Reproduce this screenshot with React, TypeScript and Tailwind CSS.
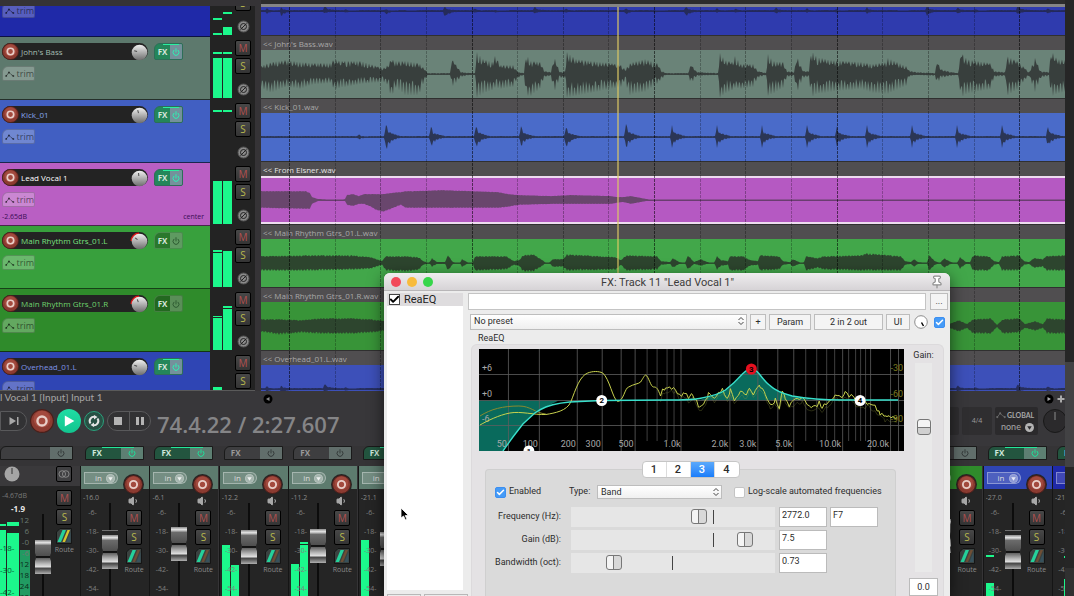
import { useState } from 'react'
import type { ReactNode } from 'react'
import { Power, Pin, Volume1, Check } from 'lucide-react'

// x, height above the centre, height below the centre
type Point = [number, number, number]

interface Track {
  name: string
  file: string
  color: string
  nameColor: string
  itemColor: string
  waveColor: string
  points: Point[]
  rough: number
  fxOn: boolean
  pan: number
  panRed?: boolean
  selected?: boolean
  // bar height, gap under the peak line, peak line height
  meters: [number, number, number][]
}

interface Strip {
  color: string
  fxOn: boolean
  peak: string
  fader: number
  mark?: boolean
  meters: [number, number, number][]
}

const WAVE_WIDTH = 804

// small seeded generator so that the waves stay the same between renders
const makeRandom = (seed: number) => {
  let value = seed
  return () => {
    value = (value * 16807) % 2147483647
    return value / 2147483647
  }
}

const wavePath = (points: Point[], rough: number, seed: number): string => {
  const random = makeRandom(seed)
  const top: string[] = []
  const bottom: string[] = []
  let i = 0
  for (let x = 0; x <= WAVE_WIDTH; x++) {
    while (i < points.length - 2 && points[i + 1][0] <= x) i++
    const [x0, u0, d0] = points[i]
    const [x1, u1, d1] = points[i + 1]
    const t = Math.min(1, Math.max(0, (x - x0) / (x1 - x0)))
    const shape = x % 3 === 0 ? 1 : 1 - rough * (0.2 + random() * 0.5)
    const up = (u0 + (u1 - u0) * t) * shape
    const down = (d0 + (d1 - d0) * t) * (x % 3 === 0 ? 1 : 1 - rough * (0.5 + random() * 0.5))
    top.push(`${x},${(24 - Math.max(0.4, up)).toFixed(1)}`)
    bottom.unshift(`${x},${(24 + Math.max(0.4, down)).toFixed(1)}`)
  }
  return `M${top.join('L')}L${bottom.join('L')}Z`
}

const hits = (list: Point[], floor: number, decay: number): Point[] => {
  const out: Point[] = [[0, floor, floor]]
  list.forEach(([x, up, down]) => {
    out.push([x - 2, floor, floor], [x, up, down], [x + 2, up / 2.5, down / 1.7])
    out.push([x + decay / 2, up / 4, down / 4], [x + decay, floor, floor])
  })
  out.push([WAVE_WIDTH, floor, floor])
  return out
}

const bass: Point[] = [
  [0, 8, 13], [5, 10, 17], [10, 12, 19], [25, 14, 13], [40, 12, 15], [50, 11, 11], [70, 11, 9], [73, 15, 16],
  [80, 13, 14], [100, 13, 10], [122, 6, 8], [127, 9, 11], [130, 15, 24], [135, 13, 14], [145, 13, 22],
  [158, 11, 21], [163, 6, 8], [167, 1, 1], [189, 1, 1], [191, 15, 13], [196, 8, 8], [200, 2, 3], [210, 1, 1],
  [214, 1, 1], [216, 22, 24], [222, 15, 20], [232, 12, 16], [234, 18, 14], [240, 9, 15], [252, 9, 13],
  [257, 2, 4], [263, 1, 1], [265, 20, 22], [270, 13, 22], [280, 12, 14], [283, 3, 3], [290, 2, 2], [293, 18, 19],
  [299, 2, 4], [304, 3, 4], [306, 22, 24], [315, 15, 22], [330, 13, 19], [350, 11, 15], [360, 9, 13],
  [365, 4, 5], [367, 10, 23], [372, 12, 20], [384, 15, 18], [396, 11, 10], [401, 3, 5], [405, 1, 1], [427, 1, 1],
  [430, 10, 10], [436, 2, 2], [457, 1, 1], [459, 21, 24], [464, 14, 20], [472, 12, 16], [474, 18, 14],
  [480, 10, 15], [492, 10, 13], [497, 3, 4], [505, 1, 1], [507, 20, 22], [512, 13, 20], [522, 12, 14],
  [526, 3, 3], [533, 2, 2], [536, 18, 19], [542, 3, 4], [548, 3, 3], [550, 24, 24], [556, 17, 20], [570, 14, 18],
  [600, 12, 15], [612, 10, 19], [625, 12, 20], [627, 16, 20], [645, 8, 12], [648, 4, 3], [655, 2, 1],
  [674, 1, 2], [676, 13, 10], [680, 5, 4], [690, 2, 2], [697, 1, 1], [700, 22, 24], [706, 15, 20],
  [716, 13, 18], [730, 11, 15], [733, 3, 3], [744, 2, 2], [746, 18, 22], [756, 13, 16], [764, 6, 6],
  [768, 2, 2], [774, 16, 18], [780, 3, 4], [788, 2, 2], [790, 24, 23], [796, 15, 20], [804, 14, 18]
]

const vocal: Point[] = [
  [0, 9, 8], [45, 9, 9], [49, 7, 9], [51, 3, 4], [57, 1, 1], [80, 0, 0], [84, 1, 1], [86, 5, 5], [92, 6, 6],
  [98, 4, 4], [103, 6, 4], [110, 6, 7], [115, 6, 10], [122, 6, 12], [130, 7, 9], [137, 8, 6], [140, 8, 5],
  [145, 9, 8], [155, 9, 8], [180, 10, 8], [237, 8, 8], [247, 6, 7], [257, 5, 5], [290, 4, 4], [310, 5, 4],
  [350, 4, 4], [355, 3, 3], [362, 3, 2], [370, 4, 4], [380, 2, 2], [392, 0, 0], [804, 0, 0]
]

const guitarLeft: Point[] = [
  [0, 7, 8], [50, 8, 8], [90, 8, 7], [110, 6, 6], [118, 3, 3], [121, 2, 2], [125, 7, 8], [145, 7, 9], [158, 6, 7],
  [162, 2, 2], [168, 0, 0], [171, 5, 4], [176, 1, 1], [184, 1, 1], [187, 8, 8], [192, 1, 1], [199, 0, 0],
  [201, 4, 4], [208, 0, 0], [212, 1, 1], [214, 7, 8], [245, 7, 7], [253, 2, 2], [258, 3, 3], [262, 8, 9],
  [272, 9, 9], [280, 4, 4], [285, 0, 0], [288, 0, 0], [292, 4, 4], [302, 4, 4], [306, 9, 8], [355, 6, 7],
  [360, 3, 2], [365, 8, 8], [396, 7, 7], [400, 2, 2], [409, 1, 1], [412, 5, 5], [418, 1, 1], [424, 0, 0],
  [427, 8, 7], [433, 1, 1], [440, 4, 3], [446, 1, 1], [453, 0, 0], [456, 7, 7], [460, 3, 3], [467, 2, 2],
  [469, 7, 8], [482, 7, 8], [489, 3, 3], [497, 2, 2], [499, 8, 8], [518, 7, 7], [522, 2, 2], [529, 1, 1],
  [532, 4, 4], [540, 0, 0], [543, 1, 1], [545, 7, 8], [557, 5, 5], [562, 7, 7], [600, 8, 8], [606, 10, 8],
  [640, 7, 8], [644, 2, 2], [650, 1, 1], [653, 4, 4], [657, 1, 1], [666, 0, 0], [668, 8, 8], [674, 2, 2],
  [679, 0, 0], [683, 5, 5], [690, 1, 1], [696, 0, 0], [699, 6, 6], [705, 1, 1], [709, 1, 1], [712, 8, 8],
  [728, 7, 8], [733, 2, 2], [738, 1, 1], [741, 7, 8], [758, 8, 8], [763, 2, 2], [768, 1, 1], [773, 5, 5],
  [782, 4, 4], [785, 7, 8], [804, 8, 8]
]

const guitarRight: Point[] = [
  [0, 7, 6], [18, 7, 9], [40, 6, 7], [60, 8, 8], [90, 8, 8], [110, 7, 7], [124, 5, 5], [200, 7, 7], [600, 7, 7],
  [688, 2, 2], [698, 6, 6], [706, 2, 2], [712, 7, 8], [730, 8, 8], [736, 1, 1], [742, 7, 8], [758, 8, 7],
  [764, 2, 2], [774, 5, 5], [782, 2, 2], [786, 8, 8], [804, 7, 8]
]

const kick = hits(
  [
    [98, 3, 3], [125, 15, 15], [170, 12, 11], [215, 13, 12], [260, 12, 11], [305, 12, 12], [365, 15, 13],
    [411, 12, 11], [456, 12, 11], [501, 12, 11], [546, 12, 11], [576, 11, 10], [606, 12, 11], [651, 12, 11],
    [696, 12, 11], [741, 12, 11], [787, 12, 11]
  ],
  1, 14
)

const overheads = hits(
  [
    [6, 3, 3], [20, 4, 6], [64, 6, 3], [85, 2, 2], [125, 2, 4], [145, 1, 1], [184, 5, 7], [214, 3, 2], [235, 1, 2],
    [274, 5, 3], [305, 3, 2], [365, 3, 4], [394, 1, 2], [425, 5, 6], [456, 3, 2], [475, 3, 2], [515, 4, 3], [546, 3, 2],
    [575, 2, 2], [606, 4, 3], [636, 1, 1], [666, 5, 5], [697, 4, 3], [715, 2, 2], [757, 6, 4], [787, 3, 3]
  ],
  1, 14
)

const tracks: Track[] = [
  {
    name: '', file: '', color: 'bg-[#1f29a8]', nameColor: 'text-[#8a94e8]', itemColor: 'bg-[#2f3bae]',
    waveColor: 'fill-[#252b5a]', points: overheads, rough: 0.4, fxOn: true, pan: 0,
    meters: [[2, 13, 2], [8, 13, 2]]
  },
  {
    name: "John's Bass", file: "John's Bass.wav", color: 'bg-[#5d796d]', nameColor: 'text-[#a3bdb2]', itemColor: 'bg-[#6a8378]',
    waveColor: 'fill-[#383f3d]', points: bass, rough: 0.7, fxOn: true, pan: -75,
    meters: [[40, 4, 2], [40, 4, 2]]
  },
  {
    name: 'Kick_01', file: 'Kick_01.wav', color: 'bg-[#415fc2]', nameColor: 'text-[#86a5ee]', itemColor: 'bg-[#4a6bc9]',
    waveColor: 'fill-[#2b3656]', points: kick, rough: 0.5, fxOn: true, pan: -15,
    meters: [[0, 49, 2], [0, 49, 2]]
  },
  {
    name: 'Lead Vocal 1', file: 'From Elsner.wav', color: 'bg-[#b95fc3]', nameColor: 'text-white', itemColor: 'bg-[#b559c2]',
    waveColor: 'fill-[#69466d]', points: vocal, rough: 0.08, fxOn: true, pan: -5, selected: true,
    meters: [[43, 0, 0], [43, 0, 0]]
  },
  {
    name: 'Main Rhythm Gtrs_01.L', file: 'Main Rhythm Gtrs_01.L.wav', color: 'bg-[#38a03d]', nameColor: 'text-[#7ae07f]',
    itemColor: 'bg-[#42a74a]', waveColor: 'fill-[#2d452e]', points: guitarLeft, rough: 0.25, fxOn: false, pan: -50, panRed: true,
    meters: [[34, 1, 2], [36, 0, 0]]
  },
  {
    name: 'Main Rhythm Gtrs_01.R', file: 'Main Rhythm Gtrs_01.R.wav', color: 'bg-[#2f8b2b]', nameColor: 'text-[#6fd36d]',
    itemColor: 'bg-[#389438]', waveColor: 'fill-[#2d452e]', points: guitarRight, rough: 0.25, fxOn: false, pan: -20, panRed: true,
    meters: [[32, 1, 1], [41, 1, 2]]
  },
  {
    name: 'Overhead_01.L', file: 'Overhead_01.L.wav', color: 'bg-[#2f45b4]', nameColor: 'text-[#7f93e6]', itemColor: 'bg-[#3d50b9]',
    waveColor: 'fill-[#262e5c]', points: overheads, rough: 0.4, fxOn: true, pan: -70,
    meters: [[26, 0, 0], [0, 0, 0]]
  }
]

const slate = 'bg-[#5d7b6e]'

const leftStrips: Strip[] = [
  { color: slate, fxOn: true, peak: '-16.0', fader: 46, mark: true, meters: [[0, 0, 0], [0, 0, 0]] },
  { color: slate, fxOn: true, peak: '-6.1', fader: 38, meters: [[0, 0, 0], [0, 0, 0]] },
  { color: slate, fxOn: false, peak: '-12.2', fader: 41, meters: [[51, 0, 0], [31, 0, 0]] },
  { color: slate, fxOn: false, peak: '-11.2', fader: 40, meters: [[31, 0, 1], [51, 1, 2]] },
  { color: slate, fxOn: true, peak: '-21.1', fader: 43, meters: [[56, 0, 0], [0, 0, 0]] }
]

const rightStrips: Strip[] = [
  { color: 'bg-[#2f8b2b]', fxOn: false, peak: '', fader: 30, meters: [[0, 0, 0], [0, 0, 0]] },
  { color: 'bg-[#2f45b4]', fxOn: true, peak: '-27.0', fader: 46, mark: true, meters: [[13, 26, 2], [0, 0, 0]] }
]

const lastStrip: Strip = { color: 'bg-[#1f29a8]', fxOn: true, peak: '-21.1', fader: 46, meters: [[0, 0, 0], [17, 21, 2]] }

function RecordButton({ className }: { className: string }) {
  return (
    <button aria-label="Record arm" className={`shrink-0 rounded-full ${className}`}>
      <svg viewBox="0 0 20 20" className="size-full">
        <circle cx="10" cy="10" r="9.5" className="fill-[#8c3b31] stroke-[#4a1f1a]" />
        <circle cx="10" cy="8.5" r="7" className="fill-[#a34a3e]" />
        <circle cx="10" cy="10" r="3.8" className="fill-none stroke-[#e9cfc9]" strokeWidth="2" />
      </svg>
    </button>
  )
}

function PanKnob({ angle, red }: { angle: number; red?: boolean }) {
  return (
    <svg viewBox="0 0 18 18" className="size-[18px] shrink-0" role="img" aria-label="Pan">
      <defs>
        <linearGradient id="knob" x1="0" y1="0" x2="0" y2="1">
          <stop offset="0" stopColor="#f0f0f0" />
          <stop offset="1" stopColor="#6c6c6c" />
        </linearGradient>
      </defs>
      {red && <path d="M0.500 9A8.500 8.500 0 0 1 9 0.500L9 9Z" className="fill-[#d81818]" />}
      <circle cx="9.500" cy="9.500" r="7.800" fill="url(#knob)" />
      <path d="M9 7V4" transform={`rotate(${angle} 9 9)`} className="stroke-[#4a4a4a]" />
    </svg>
  )
}

function SquareButton({ label, color }: { label: string; color: string }) {
  return (
    <button className={`flex size-4 shrink-0 items-center justify-center rounded-xs border border-black bg-linear-to-b from-[#484848] to-[#343434] text-[10px] leading-none ${color}`}>
      {label}
    </button>
  )
}

function PhaseButton() {
  return (
    <button aria-label="Phase" className="mt-[7px] size-[13px] shrink-0 rounded-full">
      <svg viewBox="0 0 13 13" className="size-full">
        <circle cx="6.500" cy="6.500" r="5.500" className="fill-[#8a8a8a] stroke-[#555]" />
        <circle cx="6.500" cy="6.500" r="3" className="fill-none stroke-[#232323]" />
        <path d="M3.500 9.500L9.500 3.500" className="stroke-[#232323]" />
      </svg>
    </button>
  )
}

function EnvelopeIcon({ className }: { className: string }) {
  return (
    <svg viewBox="0 0 12 8" className={className}>
      <path d="M1.500 6.500L5 2L7.500 4.500L10.500 6.500" className="fill-none stroke-current" />
      <circle cx="1.500" cy="6.500" r="1.300" className="fill-current" />
      <circle cx="5" cy="2" r="1.300" className="fill-current" />
      <circle cx="10.500" cy="6.500" r="1.300" className="fill-current" />
    </svg>
  )
}

function Meter({ values, width }: { values: [number, number, number][]; width: string }) {
  return (
    <div className="flex h-full gap-px">
      {values.map(([bar, gap, peak], i) => (
        <div key={i} className={`flex h-full flex-col justify-end ${width}`}>
          <div className="bg-[#1cf88c]" style={{ height: peak }} />
          <div style={{ height: gap }} />
          <div className="bg-[#1cf88c]" style={{ height: bar }} />
        </div>
      ))}
    </div>
  )
}

function TrackPanel({ track, first }: { track: Track; first: boolean }) {
  return (
    <div className={`flex h-[63px] shrink-0 ${first ? '-mt-8' : ''}`}>
      <div className={`flex w-[210px] flex-col border-b border-black/60 pt-1.5 pl-0.5 ${track.color}`}>
        <div className="flex items-center gap-1.5">
          <div className="flex h-[17px] w-[146px] items-center rounded-full bg-[#232323]">
            <RecordButton className="size-[17px]" />
            <span className={`min-w-0 flex-1 pl-0.5 text-[8px] leading-4 font-medium whitespace-nowrap ${track.nameColor}`}>{track.name}</span>
            <PanKnob angle={track.pan} red={track.panRed} />
          </div>
          <button
            className={`relative flex h-[17px] w-[29px] overflow-hidden rounded-xs rounded-tl-md border text-[8px] font-bold text-[#d5e5dc] ${
              track.fxOn ? 'border-[#2d6e58] bg-[#24865a]' : 'border-white/15 bg-black/25'
            }`}
          >
            <span className="flex h-full flex-1 items-center justify-center">FX</span>
            <span className={`flex h-full w-3 items-center justify-center ${track.fxOn ? 'bg-[#74919b] text-[#2ff0b4]' : 'bg-white/25 text-[#2f5c33]'}`}>
              <Power className="size-2" strokeWidth={3} />
            </span>
            {track.fxOn && <span className="absolute top-0 left-2 h-px w-4 bg-[#2af0a0]" />}
          </button>
        </div>
        <button className="mt-1.5 flex h-[15px] w-[33px] items-center gap-0.5 rounded-xs rounded-tl-md border border-black/20 bg-white/25 pl-0.5 text-[9px] leading-none text-black/55">
          <EnvelopeIcon className="h-2 w-3" />
          trim
        </button>
        {track.selected && (
          <div className="flex justify-between pr-1.5 text-[7px] leading-3 text-[#3b0e55]">
            <span className="pt-1">-2.65dB</span>
            <span className="pt-1">center</span>
          </div>
        )}
      </div>
      <div className="flex w-[45px] justify-between bg-[#232323] pr-1 pb-[2px] pl-[3px]">
        <Meter values={track.meters} width="w-[9px]" />
        <div className="flex flex-col items-center gap-0.5 pt-[3px]">
          <SquareButton label="M" color="text-[#b0504f]" />
          <SquareButton label="S" color="text-[#b9b94e]" />
          <PhaseButton />
        </div>
      </div>
    </div>
  )
}

function MediaItem({ track, first, seed }: { track: Track; first: boolean; seed: number }) {
  return (
    <div className={`h-[63px] shrink-0 ${first ? '-mt-[35px]' : ''}`}>
      <div className={`h-[15px] border-t border-[#303030] bg-[#504e50] pl-0.5 text-[8px] leading-[15px] whitespace-nowrap ${track.selected ? 'text-[#e4e4e4]' : 'text-[#a8a8a8]'}`}>
        {track.file && <>&lt;&lt; {track.file}</>}
      </div>
      <div className={`flex h-12 items-center overflow-hidden ${track.itemColor} ${track.selected ? 'border-y-2 border-[#eedcf0]' : ''}`}>
        <svg className="h-12 w-full shrink-0">
          <path d="M0 24.500H4000" className="stroke-black/40" />
          <path d={wavePath(track.points, track.rough, seed)} className={track.waveColor} />
        </svg>
      </div>
    </div>
  )
}

function GridLines() {
  const lines = Array.from({ length: 17 }, (_, i) => Math.round(28 + i * 45.64))
  return (
    <svg className="pointer-events-none absolute inset-0 size-full">
      {lines.map((x, i) => (
        <path
          key={x}
          d={`M${x + 0.5} 0V400`}
          strokeDasharray="3 1"
          className={i % 4 === 0 ? 'stroke-black/55' : i % 2 === 0 ? 'stroke-black/30' : 'stroke-black/25'}
        />
      ))}
      <path d="M357 0V400" strokeWidth="2" className="stroke-[#dcc864]/60" />
    </svg>
  )
}

function Transport() {
  return (
    <div className="h-[55px] bg-[#38373a]">
      <div className="flex h-3 items-center justify-between text-[10px] text-[#a6a6a6]">
        <span className="w-[263px] font-['Lato'] whitespace-nowrap">l Vocal 1 [Input] Input 1</span>
        <svg className="mt-1 size-2.5" viewBox="0 0 10 10">
          <circle cx="5" cy="5" r="4.500" className="fill-black" />
          <path d="M3 5L6.500 3V7Z" className="fill-[#888]" />
        </svg>
        <div className="mt-1 flex flex-1 items-center justify-end gap-[3px]">
          <svg className="size-2.5" viewBox="0 0 10 10">
            <circle cx="5" cy="5" r="4.500" className="fill-black" />
            <path d="M7 5L3.500 3V7Z" className="fill-[#aaa]" />
          </svg>
          <svg className="size-2" viewBox="0 0 8 8">
            <path d="M4 0.500V7.500M0.500 4H7.500" strokeWidth="2" className="stroke-[#aaa]" />
          </svg>
        </div>
      </div>
      <div className="flex h-9 items-center">
        <button aria-label="Next" className="flex h-5 w-[27px] items-center justify-center rounded-r-full border border-[#59595b] bg-[#323234]">
          <svg viewBox="0 0 10 10" className="size-2.5 fill-[#a8a8a8]">
            <path d="M0.500 1L7 5L0.500 9ZM8 1H9.500V9H8Z" />
          </svg>
        </button>
        <RecordButton className="ml-[3px] size-6" />
        <button aria-label="Play" className="ml-[3px] flex size-6 items-center justify-center rounded-full bg-linear-to-b from-[#1fdda4] to-[#12c58f]">
          <svg viewBox="0 0 10 10" className="size-3 fill-white">
            <path d="M1.500 0.500L9.500 5L1.500 9.500Z" />
          </svg>
        </button>
        <button aria-label="Repeat" className="ml-[3px] flex size-5 items-center justify-center rounded-full border border-[#2ba07c] bg-[#285044]">
          <svg viewBox="0 0 14 14" className="size-3.5 fill-none stroke-[#e4e4e4]" strokeWidth="2">
            <path d="M3.500 9.500A4.300 4.300 0 0 1 8.500 3M10.500 4.500A4.300 4.300 0 0 1 5.500 11" />
            <path d="M7 1V5.500L10.500 3ZM7 8.500V13L3.500 11Z" strokeWidth="0" className="fill-[#e4e4e4]" />
          </svg>
        </button>
        <div className="ml-[3px] flex h-5 w-11 divide-x divide-[#59595b] overflow-hidden rounded-full border border-[#59595b] bg-[#323234]">
          <button aria-label="Stop" className="flex flex-1 items-center justify-center">
            <span className="size-2 bg-[#b4b4b4]" />
          </button>
          <button aria-label="Pause" className="flex flex-1 items-center justify-center gap-0.5">
            <span className="h-2 w-[3px] bg-[#b4b4b4]" />
            <span className="h-2 w-[3px] bg-[#b4b4b4]" />
          </button>
        </div>
        <output className="pt-1.5 pl-1.5 text-[22px] leading-8 font-semibold whitespace-nowrap text-[#858587]">
          74.4.22 / 2:27.607
        </output>
        <div className="flex flex-1 items-center justify-end gap-[3px] overflow-hidden">
          <div className="h-7 w-24 rounded-xs bg-[#2f2e30]" />
          <div className="flex h-7 w-[30px] items-center justify-center rounded-xs bg-[#2f2e30] text-[7px] text-[#9a9a9a]">4/4</div>
          <div className="flex h-7 w-[43px] flex-col justify-center rounded-xs bg-[#2b2a2c] font-['Lato'] text-[#a8a8a8]">
            <span className="flex items-center gap-px pl-px text-[7px] leading-3 font-bold">
              <EnvelopeIcon className="h-2 w-2.5 text-[#6c6c6c]" />
              GLOBAL
            </span>
            <button className="flex items-center justify-between pr-1 pl-1.5 text-[9px] leading-3">
              none
              <svg viewBox="0 0 10 10" className="size-[9px]">
                <circle cx="5" cy="5" r="5" className="fill-[#b4b4b4]" />
                <path d="M2.500 3.500H7.500L5 7.500Z" className="fill-[#2b2a2c]" />
              </svg>
            </button>
          </div>
          <svg viewBox="0 0 24 26" className="-mr-0.5 ml-0.5 h-[26px] w-6">
            <circle cx="12" cy="13" r="11.500" className="fill-[#2b2a2c] stroke-[#191919]" />
            <path d="M12 4V12" className="stroke-[#8c8c8c]" />
          </svg>
        </div>
      </div>
    </div>
  )
}

function StripFx({ on, label = 'FX', className = '' }: { on: boolean; label?: string; className?: string }) {
  return (
    <button
      className={`relative flex h-3.5 items-center overflow-hidden rounded-tl-md border border-[#1a1a1a] text-[8px] leading-none font-bold ${
        on ? 'bg-[#23553f] text-[#cfe8dc]' : 'bg-[#3e3e40] text-[#9a9a9a]'
      } ${className}`}
    >
      <span className="flex-1 pl-1.5 text-left">{label}</span>
      <span className={`flex h-full w-[22px] items-center justify-center ${on ? 'bg-[#5d7f72] text-[#1fe09a]' : 'bg-[#616e6b] text-[#353a3a]'}`}>
        <Power className="size-2" strokeWidth={3} />
      </span>
      {on && <span className="absolute top-0 left-4 h-px w-8 bg-[#24e69a]" />}
    </button>
  )
}

function RouteButton({ second }: { second: string }) {
  return (
    <button className="flex flex-col items-center text-[7px] leading-3 text-[#8a8a8a]">
      <svg viewBox="0 0 16 16" className="size-4">
        <path d="M0.500 4L4 0.500H15.500V15.500H0.500Z" className="fill-[#3a4240] stroke-[#151515]" />
        <path d="M1.500 14L6.500 2H10L5 14Z" className="fill-[#25d29b]" />
        <path d="M6.500 14L11.500 2H14L9 14Z" className={second} />
        <path d="M10.500 14L14.500 4V14Z" className="fill-[#36515c]" />
      </svg>
      Route
    </button>
  )
}

function Fader({ top, mark }: { top: number; mark?: boolean }) {
  return (
    <div className="flex h-full w-4 flex-col items-center overflow-hidden">
      <div className="w-0.5 shrink-0 bg-[#0c0c0c]" style={{ height: mark ? top - 5 : top }} />
      {mark && <div className="mb-1 h-px w-4 shrink-0 bg-[#707070]" />}
      <svg viewBox="0 0 16 34" className="h-[34px] w-4 shrink-0">
        <defs>
          <linearGradient id="cap" x1="0" y1="0" x2="0" y2="1">
            <stop offset="0" stopColor="#8a8a8a" />
            <stop offset="0.080" stopColor="#e6e6e6" />
            <stop offset="0.160" stopColor="#6b6b6b" />
            <stop offset="0.500" stopColor="#4c4c4c" />
            <stop offset="0.520" stopColor="#5b5b5b" />
            <stop offset="0.700" stopColor="#b9b9b9" />
            <stop offset="0.780" stopColor="#dcdcdc" />
            <stop offset="0.840" stopColor="#474747" />
            <stop offset="1" stopColor="#b0b0b0" />
          </linearGradient>
        </defs>
        <path d="M0 0H16V13Q14 17 16 21V34H0V21Q2 17 0 13Z" fill="url(#cap)" />
        <path d="M1 17H15" className="stroke-black" strokeWidth="1.500" />
      </svg>
      <div className="w-0.5 flex-1 bg-[#0c0c0c]" />
    </div>
  )
}

function MixerStrip({ strip }: { strip: Strip }) {
  return (
    <>
      <StripFx on={strip.fxOn} className="ml-[5px] w-[59px] shrink-0" />
      <div className="flex min-h-0 w-[69px] flex-1 flex-col border-l border-[#151515] bg-[#252525]">
        <div className={`flex h-[23px] items-start justify-between ${strip.color}`}>
          <button className="mt-1.5 ml-[3px] flex h-3 w-[34px] items-center justify-end gap-1 rounded-r-full border border-white/35 bg-white/15 pr-0.5 text-[8px] leading-none text-[#dcdcdc]">
            in
            <svg viewBox="0 0 10 10" className="size-[9px]">
              <circle cx="5" cy="5" r="4.500" className="fill-white/35 stroke-white/40" />
              <path d="M2.500 3.500H7.500L5 7.500Z" className="fill-white/80" />
            </svg>
          </button>
          <div className="mt-2 mr-[5px] size-[21px] rounded-full bg-[#252525] p-px">
            <RecordButton className="block size-[19px]" />
          </div>
        </div>
        <div className="flex min-h-0 flex-1 pr-1.5 pl-0.5">
          <div className="relative h-full w-[19px] overflow-hidden text-[7px] whitespace-nowrap text-[#8a8a8a]">
            <div className="absolute inset-0">
              <Meter values={strip.meters} width="w-2" />
            </div>
            <div className="relative h-[15px] pt-[3px] leading-3">{strip.peak}</div>
            <ol className="relative pt-[3px] text-center text-[#808080]">
              {strip.peak && [6, 18, 30, 42, 54].map(db => (
                <li key={db} className="h-[19px] leading-3">-{db}-</li>
              ))}
            </ol>
          </div>
          <div className="h-full pt-3.5">
            <Fader top={strip.fader - 14} mark={strip.mark} />
          </div>
          <div className="ml-auto flex w-[18px] flex-col items-center pt-1.5">
            <Volume1 className="size-3 fill-[#a8a8a8] text-[#a8a8a8]" />
            <div className="mt-[3px] flex flex-col items-center gap-[3px]">
              <SquareButton label="M" color="text-[#b0504f]" />
              <SquareButton label="S" color="text-[#b9b94e]" />
              <RouteButton second="fill-[#6f4f35]" />
            </div>
          </div>
        </div>
      </div>
    </>
  )
}

function MasterStrip() {
  return (
    <div className="flex w-20 shrink-0 flex-col">
      <StripFx on={false} label="" className="w-[73px]" />
      <div className="mt-1.5 flex h-5 items-start justify-between bg-[#3a393b] pr-2 pl-1">
        <svg viewBox="0 0 16 16" className="size-4" role="img" aria-label="Master pan">
          <circle cx="8" cy="8" r="7.500" className="fill-[#a5a5a5]" />
          <path d="M8 2V8" className="stroke-[#333]" />
        </svg>
        <button aria-label="Mono" className="size-4 rounded-xs border border-black bg-[#404042]">
          <svg viewBox="0 0 16 16" className="size-full fill-none stroke-[#909090]">
            <circle cx="6" cy="8" r="3.800" />
            <circle cx="10" cy="8" r="3.800" />
          </svg>
        </button>
      </div>
      <div className="flex min-h-0 flex-1 overflow-hidden bg-[#252525] pr-1.5">
        <div className="relative h-full w-[31px] text-[8px] leading-[11px]">
          <div className="absolute inset-0 flex items-end gap-px">
            <div className="flex h-[72px] w-1.5 flex-col gap-1">
              <div className="h-0.5 bg-[#1cf88c]" />
              <div className="flex-1 bg-[#1cf88c]" />
            </div>
            <div className="flex h-[74px] w-3 flex-col gap-[7px]">
              <div className="h-1 bg-[#1cf88c]" />
              <div className="flex-1 bg-[#1cf88c]" />
            </div>
            <div className="h-[46px] w-2.5 bg-[#219b62]" />
          </div>
          <div className="relative pt-1 pl-0.5 text-[7px] text-[#777]">-4.67dB</div>
          <div className="relative pt-0.5 pr-1.5 text-right font-bold text-[#e4e4e4]">-1.9</div>
          <div className="relative flex justify-between">
            <ol className="pt-7 text-[#0b5a34]">
              {[18, 30, 42].map(db => (
                <li key={db} className="h-[22px]">-{db}-</li>
              ))}
            </ol>
            <ol className="pr-0.5 text-right text-[#6a7a72]">
              {['12', '6', '-0', '-6', '12', '18', '24', '30'].map((db, i) => (
                <li key={i} className={i > 3 ? 'text-[#0a2a1a]' : ''}>{db}</li>
              ))}
            </ol>
          </div>
        </div>
        <div className="ml-1 h-full pt-7">
          <Fader top={26} />
        </div>
        <div className="ml-auto flex flex-col items-center gap-[3px] pt-1">
          <SquareButton label="M" color="text-[#b0504f]" />
          <SquareButton label="S" color="text-[#b9b94e]" />
          <RouteButton second="fill-[#d8c52c]" />
        </div>
      </div>
    </div>
  )
}

const spectrum: [number, number][] = [
  [184, 42], [187, 38], [191, 38], [197, 40], [201, 47], [206, 44], [211, 49], [214, 45], [221, 58], [227, 53], [230, 44],
  [236, 48], [244, 40], [249, 49], [252, 41], [256, 52], [262, 42], [268, 46], [271, 38], [275, 45], [279, 38], [282, 38],
  [287, 45], [292, 56], [297, 51], [301, 58], [304, 43], [307, 49], [311, 56], [317, 51], [324, 49], [329, 56], [335, 59],
  [341, 54], [344, 58], [349, 53], [357, 46], [364, 47], [367, 44], [374, 48], [379, 54], [391, 54], [397, 58], [402, 64],
  [407, 67], [420, 68]
]

const spectrumPath = (shift: number, seed: number): string => {
  const random = makeRandom(seed)
  const out: string[] = []
  for (let i = 0; i < spectrum.length - 1; i++) {
    const [x0, y0] = spectrum[i]
    const [x1, y1] = spectrum[i + 1]
    for (let x = x0; x < x1; x += 2) {
      const y = y0 + ((y1 - y0) * (x - x0)) / (x1 - x0)
      out.push(`L${x},${(y + shift + (random() - 0.5) * 4).toFixed(1)}`)
    }
  }
  return out.join('')
}

const longLines = [29, 60, 98, 123, 142, 156, 202, 251, 279, 299, 315, 364, 392, 412, 420]
const shortLines = [168, 178, 188, 195, 327, 338, 348, 356, 370, 377, 382, 387]
const freqLabels: [number, string][] = [
  [28, '50'], [59, '100'], [97, '200'], [122, '300'], [155, '500'], [202, '1.0k'], [250, '2.0k'], [278, '3.0k'],
  [314, '5.0k'], [363, '10.0k'], [411, '20.0k']
]

function EqGraph() {
  return (
    <svg viewBox="0 0 426 102" preserveAspectRatio="none" className="h-[102px] w-full bg-black text-[9px]">
      <path d="M0 51.500H80L67 58L56 64L44 75L34 88L24 102H0Z" className="fill-[#0b7c6c]/85" />
      <path d="M221 51L237 46L247 41L257 33L264 25L273 20L281 25L291 36L301 42L314 47L334 51Z" className="fill-[#0b7c6c]/85" />
      {longLines.map(x => (
        <path key={x} d={`M${x + 0.5} 0V102`} className="stroke-[#5e5e5e]/80" />
      ))}
      {shortLines.map(x => (
        <path key={x} d={`M${x + 0.5} 0V92`} className="stroke-[#3f3f3f]" />
      ))}
      <path d="M0 25.500H426M0 51.500H426M0 76.500H426" className="stroke-[#5e5e5e]/80" />
      <g className="fill-[#a8a8a8]">
        <text x="3" y="22">+6</text>
        <text x="3" y="48">+0</text>
        <text x="3" y="73">-6</text>
        {freqLabels.map(([x, text]) => (
          <text key={text} x={x} y="98" textAnchor="end">{text}</text>
        ))}
      </g>
      <g className="fill-[#7a7a20]" textAnchor="end">
        <text x="425" y="22">-30</text>
        <text x="425" y="48">-60</text>
        <text x="425" y="73">-90</text>
      </g>
      <path d="M1 67C12 60 24 57 40 57C52 57 56 64 67 65" className="fill-none stroke-[#8a8a30]" />
      <path d={`M182 53${spectrumPath(4, 37)}`} className="fill-none stroke-[#8d9440]/30" />
      <path
        d={`M1 76C8 72 20 66 31 64C42 62 55 66 67 65.500C76 64 88 62 92 53C97 40 101 27 109 24C114 22 120 22 124 24C131 30 134 50 139 52.500C145 52 146 39 150 38C155 35 160 35 162 33C164 30 166 26 167 26C170 27 172 38 175 38C178 38 179 39 182 47${spectrumPath(0, 91)}`}
        className="fill-none stroke-[#c9d24e]"
      />
      <path
        d="M24 102L34 88L44 75L56 64Q62 60 67 58Q80 53 101 52.500L123 51.500L190 51Q212 51 221 49.500Q240 46 247 41Q256 34 264 25Q269 20 273 20Q277 20 281 25Q288 34 291 36Q298 43 314 47Q336 51 364 51H420"
        strokeWidth="1.400"
        className="fill-none stroke-[#38dfcb]"
      />
      <g textAnchor="middle" className="fill-black text-[8px] font-bold">
        <circle cx="50" cy="102" r="5.500" className="fill-white" />
        <text x="50" y="105">1</text>
        <circle cx="123" cy="51.500" r="5.500" className="fill-white" />
        <text x="123" y="54">2</text>
        <circle cx="273" cy="20" r="5.500" className="fill-[#e5101f]" />
        <text x="273" y="23">3</text>
        <circle cx="382" cy="51.500" r="5.500" className="fill-white" />
        <text x="382" y="54">4</text>
      </g>
    </svg>
  )
}

function UpDown() {
  return (
    <svg viewBox="0 0 8 10" className="pointer-events-none absolute top-0.5 right-0.5 h-2.5 w-2 fill-none stroke-[#444]">
      <path d="M1.500 4L4 1.500L6.500 4M1.500 6L4 8.500L6.500 6" />
    </svg>
  )
}

function CheckBox({ id, checked }: { id: string; checked: boolean }) {
  const [on, setOn] = useState(checked)
  return (
    <span className="relative size-[11px] shrink-0">
      <input
        id={id}
        type="checkbox"
        aria-label={id}
        checked={on}
        onChange={e => setOn(e.target.checked)}
        className="block size-[11px] appearance-none rounded-xs border border-[#c4c4c4] bg-white checked:border-[#3d8ff0] checked:bg-[#459bf7]"
      />
      {on && <Check className="pointer-events-none absolute inset-px size-[9px] text-white" strokeWidth={4} />}
    </span>
  )
}

interface ParamRowProps {
  id: string
  label: string
  value: number
  tick: number
  text: string
  children?: ReactNode
}

function ParamRow({ id, label, value, tick, text, children }: ParamRowProps) {
  return (
    <div className="flex h-[23px] items-center">
      <label htmlFor={id} className="w-[76px] pr-0.5 text-right whitespace-nowrap">{label}</label>
      <div className="relative ml-2 flex h-5 w-[204px] items-center bg-[#e6e6e6]">
        <span className="absolute top-[3px] h-3.5 w-px bg-[#444]" style={{ left: `${tick}%` }} />
        <input
          id={id}
          type="range"
          defaultValue={value}
          step="0.1"
          className="relative w-full appearance-none bg-transparent [&::-webkit-slider-thumb]:h-[15px] [&::-webkit-slider-thumb]:w-4 [&::-webkit-slider-thumb]:appearance-none [&::-webkit-slider-thumb]:rounded-[3px] [&::-webkit-slider-thumb]:border [&::-webkit-slider-thumb]:border-[#777] [&::-webkit-slider-thumb]:bg-[linear-gradient(90deg,#f4f4f4_0_6px,#777_6px_7px,#d8d8d8_7px)]"
        />
      </div>
      <input aria-label={`${label} value`} defaultValue={text} className="ml-1 h-5 w-12 border border-[#bbb] bg-white px-0.5 pb-1" />
      {children}
    </div>
  )
}

function FxWindow() {
  const [band, setBand] = useState(3)
  const button = 'h-4 border border-[#bdbdbd] bg-[#f4f4f4] leading-none whitespace-nowrap'

  return (
    <section className="absolute top-[273px] bottom-0 left-96 z-10 flex w-[566px] flex-col overflow-hidden rounded-t-md bg-[#ececec] font-['Roboto',sans-serif] text-[9px] text-[#2c2c2c] shadow-[0_4px_16px_rgba(0,0,0,0.6)]">
      <header className="flex h-[18px] shrink-0 items-center border-b border-[#b8b6b8] bg-linear-to-b from-[#efedef] to-[#d6d3d6] pt-px pr-1.5 pl-[7px]">
        <div className="flex w-16 gap-1.5">
          <button aria-label="Close" className="size-2.5 rounded-full bg-[#f2495a]" />
          <button aria-label="Minimize" className="size-2.5 rounded-full bg-[#f8bb3c]" />
          <button aria-label="Zoom" className="size-2.5 rounded-full bg-[#36d64a]" />
        </div>
        <h1 className="flex-1 pt-px text-center text-[11px] leading-4 text-[#3c3c3c]">FX: Track 11 &quot;Lead Vocal 1&quot;</h1>
        <div className="flex w-16 justify-end">
          <Pin className="size-3.5 fill-white text-[#8c8c8c]" />
        </div>
      </header>
      <div className="flex min-h-0 flex-1">
        <div className="flex w-[84px] shrink-0 flex-col pl-[3px]">
          <div className="mt-0.5 w-[76px] flex-1 bg-white">
            <label className="flex h-[13px] items-center gap-1 bg-[#dedcde] pl-0.5 text-[11px] leading-none text-[#222]">
              <span className="relative size-[11px]">
                <input type="checkbox" defaultChecked className="block size-[11px] appearance-none border border-[#444] bg-white" />
                <Check className="pointer-events-none absolute inset-0 size-[11px] text-black" strokeWidth={4} />
              </span>
              ReaEQ
            </label>
          </div>
          <div className="mt-1 flex h-[2px] gap-[3px]">
            <div className="w-[34px] border border-b-0 border-[#b8b8b8]" />
            <div className="flex-1 border border-b-0 border-[#b8b8b8]" />
          </div>
        </div>
        <div className="flex min-w-0 flex-1 flex-col pr-0.5">
          <div className="mt-0.5 flex gap-1">
            <input aria-label="Comment" className="h-[17px] flex-1 border border-[#c4c4c4] bg-white" />
            <button className="h-[17px] w-[18px] border border-[#bdbdbd] bg-[#f4f4f4] leading-none">...</button>
          </div>
          <div className="mt-1 flex items-center gap-[3px] pl-0.5">
            <div className="relative flex-1">
              <select aria-label="Preset" className="block h-4 w-full appearance-none border border-[#bdbdbd] bg-linear-to-b from-white to-[#efefef] pl-[3px]">
                <option>No preset</option>
              </select>
              <UpDown />
            </div>
            <button className={`w-4 ${button}`}>+</button>
            <button className={`w-[42px] ${button}`}>Param</button>
            <button className={`w-[69px] ${button}`}>2 in 2 out</button>
            <button className={`w-6 ${button}`}>UI</button>
            <svg viewBox="0 0 14 14" className="mx-px size-3.5" role="img" aria-label="Wet mix">
              <circle cx="7" cy="7" r="6.300" className="fill-white stroke-[#8c8c8c]" />
              <path d="M7.500 7.500L9.500 11" strokeWidth="1.500" className="stroke-black" />
            </svg>
            <span className="mr-[3px] ml-0.5 flex">
              <CheckBox id="Bypass" checked />
            </span>
          </div>
          <div className="h-3.5 pl-2.5 leading-[16px]">ReaEQ</div>
          <div className="mr-1 ml-[3px] flex min-h-0 flex-1 rounded-t-md border border-b-0 border-[#dcdadc] bg-[#e4e2e4] pt-1 pl-[7px]">
            <div className="flex min-w-0 flex-1 flex-col">
              <EqGraph />
              <div className="relative mt-[18px] mr-2 ml-1.5 flex-1 rounded-t-sm border border-b-0 border-[#cfcfcf] bg-[#dadada]">
                <div className="absolute inset-x-0 -top-[9px] flex justify-center">
                  <div className="flex h-[17px] overflow-hidden rounded-sm border border-[#c6c6c6] bg-white text-[11px] font-medium">
                    {[1, 2, 3, 4].map(n => (
                      <button
                        key={n}
                        onClick={() => setBand(n)}
                        className={`w-6 border-r border-[#dcdcdc] leading-none last:border-r-0 ${band === n ? 'bg-linear-to-b from-[#5aa9fb] to-[#197dfa] text-white' : ''}`}
                      >
                        {n}
                      </button>
                    ))}
                  </div>
                </div>
                <div className="mt-3.5 flex h-4 items-center pl-[9px] whitespace-nowrap">
                  <CheckBox id="Enabled" checked />
                  <label htmlFor="Enabled" className="w-[63px] pl-[3px]">Enabled</label>
                  <label htmlFor="type" className="w-7">Type:</label>
                  <div className="relative w-[125px]">
                    <select id="type" className="block h-3.5 w-full appearance-none border border-[#bdbdbd] bg-linear-to-b from-white to-[#f0f0f0] pl-[3px] leading-none">
                      <option>Band</option>
                    </select>
                    <UpDown />
                  </div>
                  <span className="ml-3 flex">
                    <CheckBox id="Log" checked={false} />
                  </span>
                  <label htmlFor="Log" className="pl-[3px]">Log-scale automated frequencies</label>
                </div>
                <div className="mt-[5px] pl-px">
                  <ParamRow id="freq" label="Frequency (Hz):" value={63.8} tick={69.5} text="2772.0">
                    <input aria-label="Note" defaultValue="F7" className="ml-[3px] h-5 w-12 border border-[#bbb] bg-white px-0.5 pb-1" />
                  </ParamRow>
                  <ParamRow id="gain" label="Gain (dB):" value={88.3} tick={69.5} text="7.5" />
                  <ParamRow id="bandwidth" label="Bandwidth (oct):" value={18.6} tick={49.5} text="0.73" />
                </div>
              </div>
            </div>
            <div className="flex w-[39px] shrink-0 flex-col items-center">
              <label htmlFor="master-gain" className="h-[15px]">Gain:</label>
              <div className="flex h-[209px] w-[17px] shrink-0 justify-center bg-[#e9e9e9]">
                <input
                  id="master-gain"
                  type="range"
                  defaultValue="29"
                  className="h-[209px] w-4 appearance-none bg-transparent [writing-mode:vertical-lr] [&::-webkit-slider-thumb]:h-4 [&::-webkit-slider-thumb]:w-3.5 [&::-webkit-slider-thumb]:appearance-none [&::-webkit-slider-thumb]:rounded-[3px] [&::-webkit-slider-thumb]:border [&::-webkit-slider-thumb]:border-[#777] [&::-webkit-slider-thumb]:bg-[linear-gradient(180deg,#f4f4f4_0_7px,#777_7px_8px,#d0d0d0_8px)]"
                />
              </div>
              <input aria-label="Gain value" defaultValue="0.0" className="mt-1.5 h-[18px] w-[29px] shrink-0 border border-[#bbb] bg-white text-center" />
            </div>
          </div>
        </div>
      </div>
    </section>
  )
}

export default function App() {
  return (
    <div className="relative flex h-screen overflow-hidden bg-[#353336] font-['Open_Sans',sans-serif]">
      <main className="flex min-w-0 flex-1 flex-col">
        <div className="flex min-h-0 flex-1">
          <div className="flex w-[255px] shrink-0 flex-col overflow-hidden border-b border-[#5a5a5a] pt-1.5">
            <div className="flex min-h-0 flex-1 flex-col overflow-hidden">
              {tracks.map((track, i) => (
                <TrackPanel key={i} track={track} first={i === 0} />
              ))}
            </div>
          </div>
          <div className="ml-1.5 flex min-w-0 flex-1 flex-col overflow-hidden">
            <div className="h-1 shrink-0 bg-[#2c2c2c]" />
            <div className="h-[3px] shrink-0 bg-[#858585]" />
            <div className="relative flex min-h-0 flex-1 flex-col overflow-hidden">
              {tracks.map((track, i) => (
                <MediaItem key={i} track={track} first={i === 0} seed={i * 77 + 11} />
              ))}
              <GridLines />
            </div>
          </div>
        </div>
        <Transport />
        <div className="flex h-[150px] shrink-0 bg-[#353436]">
          <MasterStrip />
          {leftStrips.map((strip, i) => (
            <div key={i} className="flex min-w-0 flex-1 flex-col gap-1.5">
              <MixerStrip strip={strip} />
            </div>
          ))}
          <div className="flex-7" />
          {rightStrips.map((strip, i) => (
            <div key={i} className="flex min-w-0 flex-1 flex-col gap-1.5">
              <MixerStrip strip={strip} />
            </div>
          ))}
          <div className="flex w-[13px] flex-col gap-1.5 overflow-hidden">
            <MixerStrip strip={lastStrip} />
          </div>
        </div>
      </main>
      <aside className="flex w-[9px] flex-col bg-[#262626]">
        <div className="h-[362px]" />
        <div className="h-[105px] bg-[#424244]" />
        <div className="mt-[101px] flex-1 bg-[#303030]" />
      </aside>
      <FxWindow />
      <svg viewBox="0 0 10 14" className="pointer-events-none absolute top-[507px] left-[400px] z-20 h-3.5 w-2.5">
        <path d="M1 1V11L3.500 9L5.500 13L7 12.300L5.200 8.500H8.500Z" className="fill-black stroke-white" strokeWidth="0.800" />
      </svg>
    </div>
  )
}
